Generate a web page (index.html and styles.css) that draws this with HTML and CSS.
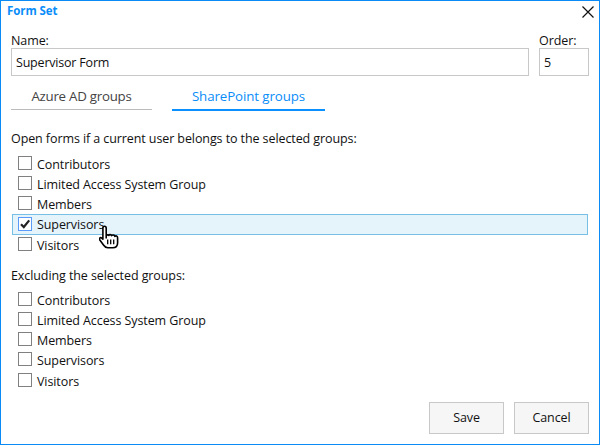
FILE: index.html
```html
<!DOCTYPE html>
<html lang="en">
<head>
<meta charset="utf-8">
<title>Form Set</title>
<link rel="stylesheet" href="styles.css">
</head>
<body>
<main class="dialog">
  <header class="titlebar">
    <h1 class="title">Form Set</h1>
    <svg class="close" viewBox="0 0 12 12" width="12" height="12"><path d="M.5.5l11 11M11.5.5l-11 11"/></svg>
  </header>
  <div class="fields">
    <label class="field name"><span>Name:</span><input type="text" value="Supervisor Form"></label>
    <label class="field order"><span>Order:</span><input type="text" value="5"></label>
  </div>
  <nav class="tabs">
    <div class="tab azure"><span>Azure AD groups</span></div>
    <div class="tab active"><span>SharePoint groups</span></div>
  </nav>
  <section class="include">
    <h2>Open forms if a current user belongs to the selected groups:</h2>
    <div class="row"><i class="box"></i><span>Contributors</span></div>
    <div class="row"><i class="box"></i><span>Limited Access System Group</span></div>
    <div class="row"><i class="box"></i><span>Members</span></div>
    <div class="row selected"><i class="box"><svg viewBox="0 0 12 12" width="12" height="12"><path d="M2 6.2l2.8 2.8L10.2 2.4"/></svg></i><span>Supervisors</span>
      <svg class="cursor" viewBox="0 0 20 24" width="20" height="24"><path class="hand" d="M7.2 13.6V3.2C7.2.5 3.9.5 3.9 3.2v11.1L2.8 13.2C1.2 11.9-.3 13.5 1 15.2l3.7 5.1c1 1.5 2.2 2.5 4.1 2.5h4.8c3 0 5-1.7 5-4.7v-5.4c0-1.8-1.8-2.2-2.8-1.4-.4-1.4-2.3-1.7-3.1-.7-.6-1.3-2.4-1.3-2.9-.2-.6-.6-1.8-.6-2.6 0"/><path class="fingers" d="M8.7 14.5v4.8M11.7 14.5v4.8M14.7 14.5v4.8"/></svg>
    </div>
    <div class="row"><i class="box"></i><span>Visitors</span></div>
  </section>
  <section class="exclude">
    <h2>Excluding the selected groups:</h2>
    <div class="row"><i class="box"></i><span>Contributors</span></div>
    <div class="row"><i class="box"></i><span>Limited Access System Group</span></div>
    <div class="row"><i class="box"></i><span>Members</span></div>
    <div class="row tall"><i class="box"></i><span>Supervisors</span></div>
    <div class="row"><i class="box"></i><span>Visitors</span></div>
  </section>
  <footer class="actions">
    <button>Save</button>
    <button>Cancel</button>
  </footer>
</main>
</body>
</html>
```
FILE: styles.css
```css
* { box-sizing: border-box; }
body {
  margin: 0;
  background: #fff;
  color: #111;
  font: 12.5px/18px "Open Sans", sans-serif;
  letter-spacing: -0.09px;
}
.dialog {
  width: 600px;
  height: 445px;
  border: 1px solid #0a8af5;
  padding: 0 10px;
  overflow: hidden;
}
.titlebar {
  display: flex;
  justify-content: space-between;
  height: 30px;
  margin: 0 -6px 0 -4px;
}
.title {
  margin: 0;
  font-size: 11.5px;
  line-height: 20px;
  font-weight: 700;
  color: #0a8df9;
}
.close {
  margin: 5px 1px 0 0;
  fill: none;
  stroke: #111;
  stroke-width: 1.2;
}
.fields { display: flex; gap: 10px; }
.field { display: flex; flex-direction: column; }
.field span { height: 17px; line-height: 19px; }
.name { width: 518px; }
.order { width: 50px; }
input {
  width: 100%;
  height: 28px;
  border: 1px solid #c8c8c8;
  padding: 0 4px;
  font: inherit;
  letter-spacing: -0.2px;
  color: inherit;
}
.tabs { display: flex; gap: 20px; margin-top: 8px; height: 27px; align-items: flex-start; }
.tab {
  width: 141px;
  height: 26px;
  border-bottom: 1px solid #bbb;
  text-align: center;
  font-size: 13.3px;
  line-height: 24px;
  color: #444;
}
.azure { letter-spacing: -0.25px; }
.active {
  width: 153px;
  height: 27px;
  border-bottom: 2px solid #0a90ff;
  color: #0a8df9;
}
h2 { margin: 0; font: inherit; }
.include { margin-top: 19px; }
.include h2 { height: 24px; }
.exclude { margin-top: 12px; }
.exclude h2 { height: 23px; }
.row {
  position: relative;
  display: flex;
  align-items: flex-start;
  height: 20px;
  margin: 0 0 0 1px;
  padding: 2px 0 0 6px;
  width: 576px;
}
.row span { margin-left: 5px; }
.selected { height: 21px; padding: 2px 0 0 5px; border: 1px solid #77bfe5; background: #e5f3fb; }
.selected span { line-height: 16px; }
.tall { height: 21px; }
.box {
  flex: none;
  width: 14px;
  height: 14px;
  border: 1px solid #808080;
  background: #fff;
}
.selected .box { border-color: #5a9bfa; }
.box svg { display: block; fill: none; stroke: #222; stroke-width: 2.2; }
.cursor { position: absolute; left: 86px; top: 10px; z-index: 1; }
.hand { fill: #fff; stroke: #000; stroke-width: 1.6; stroke-linejoin: round; }
.fingers { fill: none; stroke: #000; stroke-width: 1.3; }
.actions { display: flex; justify-content: flex-end; gap: 10px; margin-top: 11px; }
button {
  width: 75px;
  height: 32px;
  padding: 0;
  border: 1px solid #c8c8c8;
  background: #f6f6f6;
  font: inherit;
  letter-spacing: inherit;
  color: inherit;
}
```
